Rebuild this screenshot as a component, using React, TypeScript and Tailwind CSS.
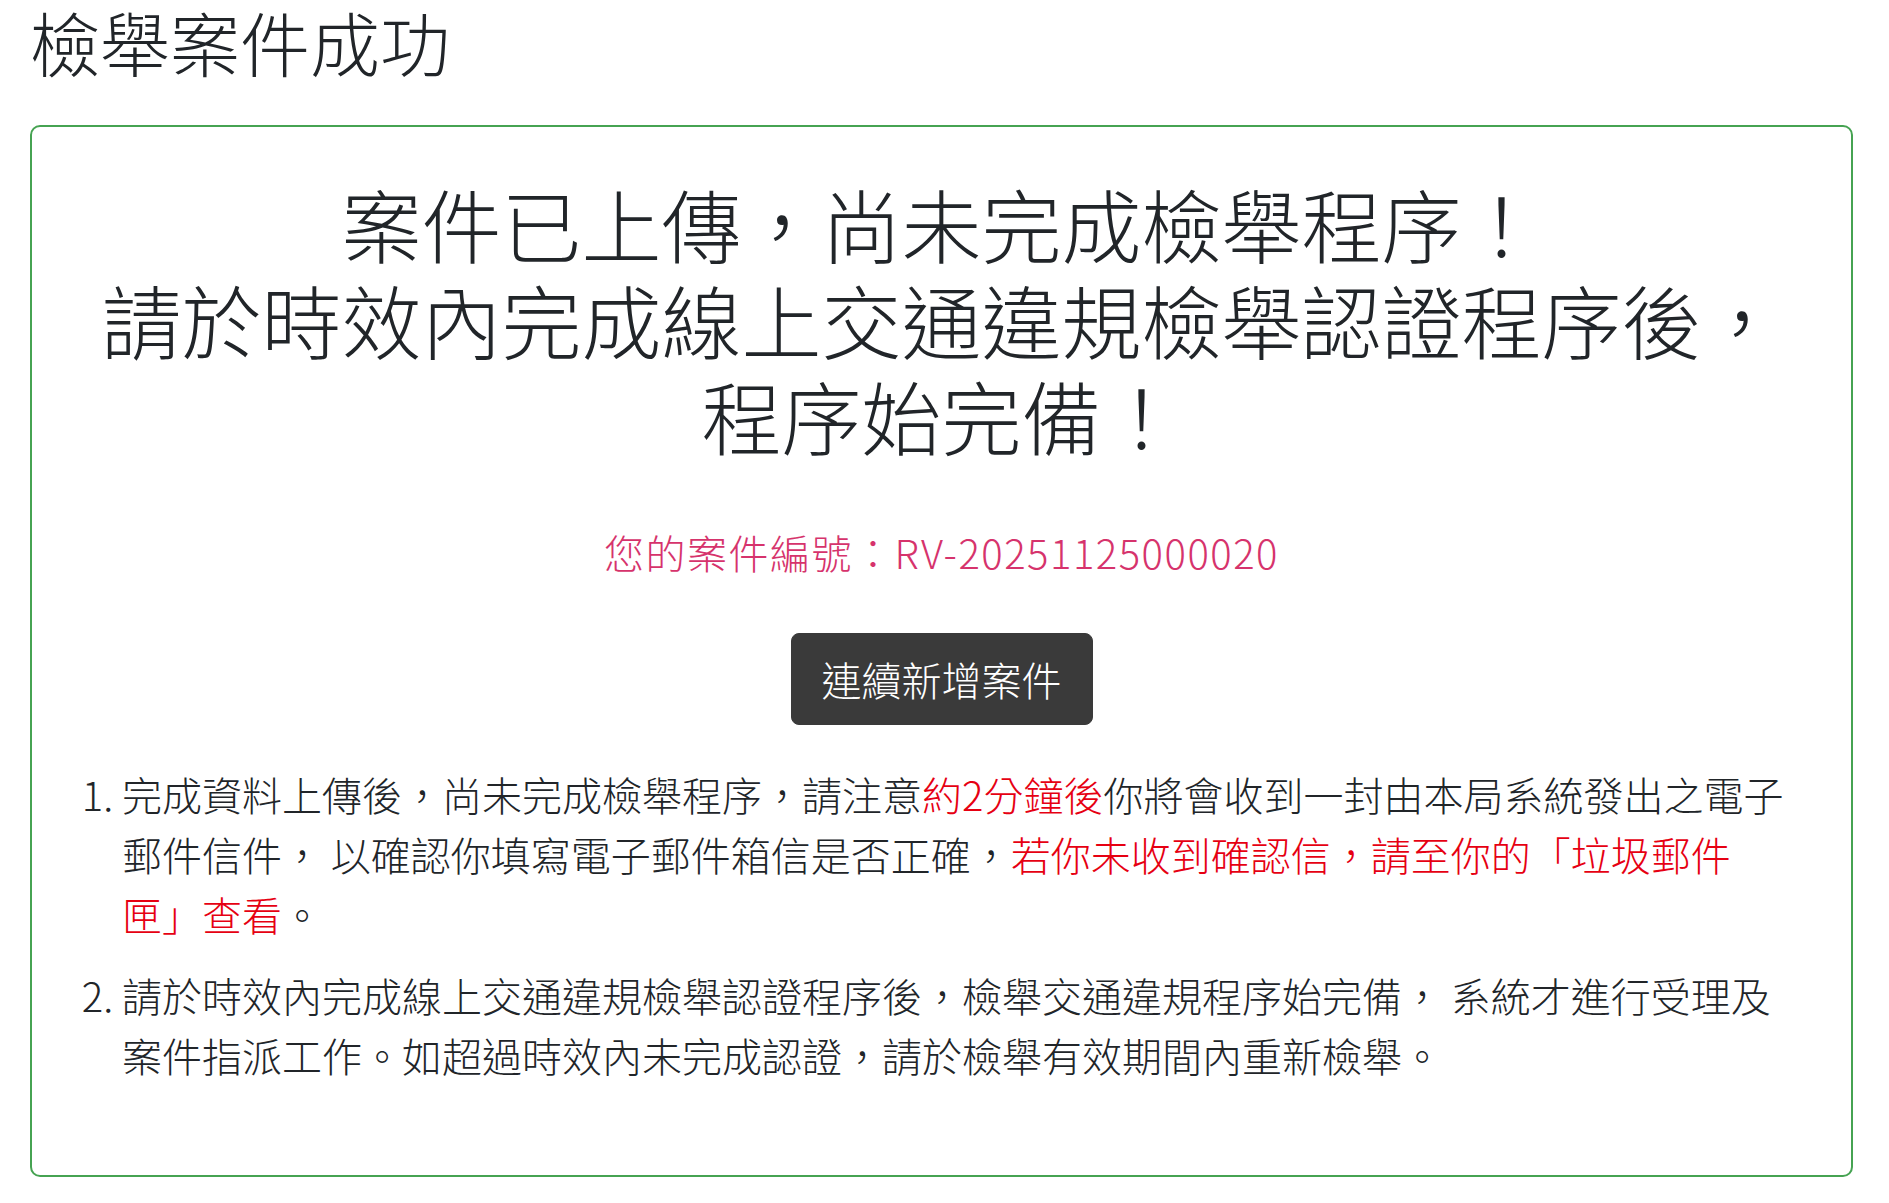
import React from "react";

const font = { fontFamily: '"Noto Sans CJK TC", "Noto Sans", sans-serif' };

const App: React.FC = () => {
  return (
    <div lang="zh-Hant" className="min-h-screen bg-white pl-[30px] pr-[36px] font-light text-[#212529]" style={font}>
      <h3 className="mb-[41px] text-[70px] font-light leading-[84px]">檢舉案件成功</h3>

      <div className="rounded-[10px] border-2 border-[#46a352] px-[48px] pt-[47px] pb-[90px]">
        <h2 className="mb-[60px] text-center text-[80px] font-light leading-[96px]">
          案件已上傳，尚未完成檢舉程序！
          <br />
          請於時效內完成線上交通違規檢舉認證程序後，程序始完備！
        </h2>

        <p className="text-center text-[40px] leading-[60px] tracking-[1.5px] text-[#d6336c]">
          您的案件編號：RV-20251125000020
        </p>

        <div className="mt-[51px] flex justify-center">
          <button
            type="button"
            className="rounded-[8px] border border-[#3a3a3a] bg-[#3a3a3a] px-[30px] py-[15px] text-[40px] font-light leading-[60px] text-white"
          >
            連續新增案件
          </button>
        </div>

        <ol className="mt-[39px] list-decimal pl-[42px] text-[40px] leading-[60px]">
          <li>
            完成資料上傳後，尚未完成檢舉程序，請注意
            <span className="text-[#e60012]">約2分鐘後</span>
            你將會收到一封由本局系統發出之電子郵件信件， 以確認你填寫電子郵件箱信是否正確，
            <span className="text-[#e60012]">
              若你未收到確認信，請至你的「垃圾郵件
              <br />
              匣」查看
            </span>
            。
          </li>
          <li className="mt-[21px]">
            請於時效內完成線上交通違規檢舉認證程序後，檢舉交通違規程序始完備， 系統才進行受理及案件指派工作。如超過時效內未完成認證，請於檢舉有效期間內重新檢舉。
          </li>
        </ol>
      </div>
    </div>
  );
};

export default App;
